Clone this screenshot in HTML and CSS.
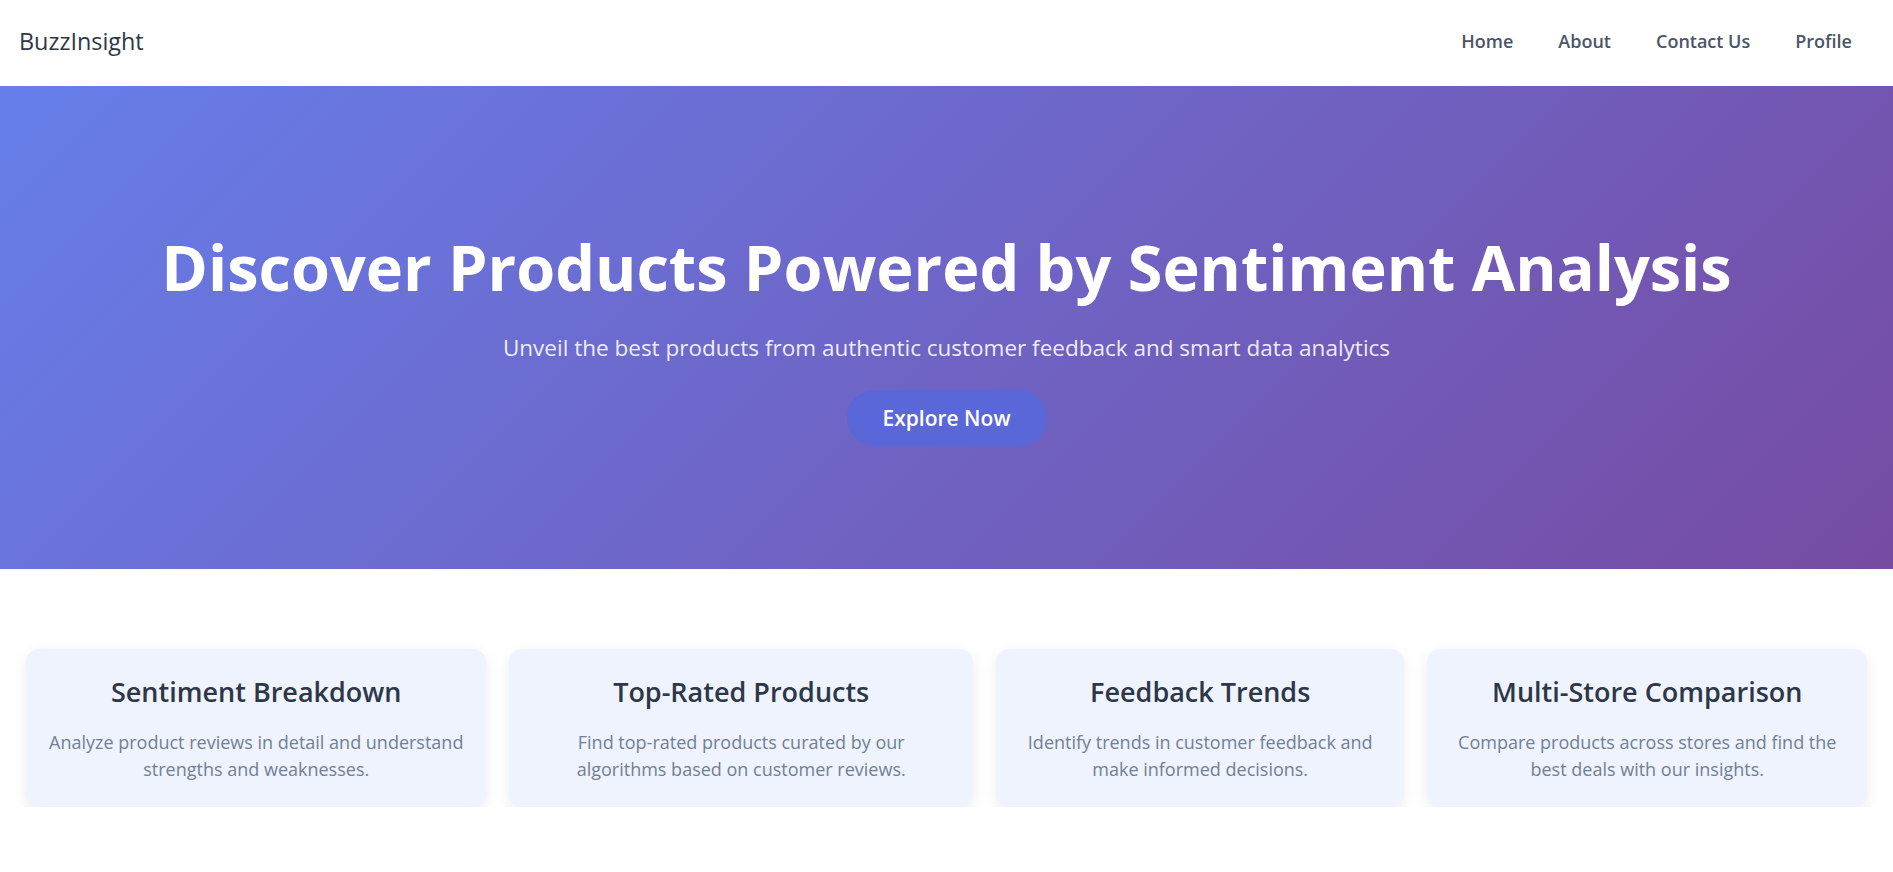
FILE: index.html
```html
<!DOCTYPE html>
<html lang="en">
<head>
<meta charset="utf-8">
<title>BuzzInsight</title>
<link rel="stylesheet" href="styles.css">
</head>
<body>
<header class="site-header">
  <div class="logo">BuzzInsight</div>
  <nav class="nav">
    <a href="#">Home</a>
    <a href="#">About</a>
    <a href="#">Contact Us</a>
    <a href="#">Profile</a>
  </nav>
</header>
<section class="hero">
  <h1 class="hero-title">Discover Products Powered by Sentiment Analysis</h1>
  <p class="hero-sub">Unveil the best products from authentic customer feedback and smart data analytics</p>
  <a class="hero-btn" href="#">Explore Now</a>
</section>
<section class="features">
  <div class="card">
    <h3>Sentiment Breakdown</h3>
    <p>Analyze product reviews in detail and understand strengths and weaknesses.</p>
  </div>
  <div class="card">
    <h3>Top-Rated Products</h3>
    <p>Find top-rated products curated by our algorithms based on customer reviews.</p>
  </div>
  <div class="card">
    <h3>Feedback Trends</h3>
    <p>Identify trends in customer feedback and make informed decisions.</p>
  </div>
  <div class="card">
    <h3>Multi-Store Comparison</h3>
    <p>Compare products across stores and find the best deals with our insights.</p>
  </div>
</section>
</body>
</html>
```
FILE: styles.css
```css
* { box-sizing: border-box; }
body {
  margin: 0;
  font-family: "Open Sans", "Noto Sans", sans-serif;
  background: #ffffff;
  color: #2d3748;
}
.site-header {
  height: 86px;
  display: flex;
  align-items: center;
  justify-content: space-between;
  padding: 0 41px 4px 19px;
  background: #fff;
}
.logo {
  font-size: 23.4px;
  font-weight: 500;
  color: #2d3748;
}
.nav {
  display: flex;
  gap: 45px;
}
.nav a {
  font-size: 18px;
  font-weight: 600;
  color: #4a5568;
  text-decoration: none;
}
.hero {
  height: 483px;
  background: linear-gradient(135deg, #667eea 0%, #764ba2 100%);
  display: flex;
  flex-direction: column;
  align-items: center;
  padding-top: 143px;
  color: #fff;
  text-align: center;
}
.hero-title {
  margin: 0;
  font-size: 63px;
  line-height: 1.2;
  font-weight: 700;
}
.hero-sub {
  margin: 26px 0 25px;
  font-size: 22.5px;
  line-height: 1.55;
  color: rgba(255, 255, 255, 0.9);
}
.hero-btn {
  display: inline-flex;
  align-items: center;
  justify-content: center;
  width: 200px;
  height: 56px;
  border-radius: 28px;
  background: #5a67d8;
  color: #fff;
  font-size: 21px;
  font-weight: 600;
  text-decoration: none;
}
.features {
  display: grid;
  grid-template-columns: 461fr 464fr 409fr 440fr;
  align-items: start;
  gap: 23px;
  padding: 80px 26px 0;
}
.card {
  background: #eef3fd;
  border-radius: 13px;
  padding: 25px 22.5px 24px;
  text-align: center;
  box-shadow: 0 4px 14px rgba(0, 0, 0, 0.08);
}
.card h3 {
  margin: 0 0 18px;
  font-size: 27px;
  font-weight: 600;
  line-height: 1.362;
  color: #2d3748;
}
.card p {
  margin: 0;
  font-size: 18px;
  line-height: 27px;
  color: #718096;
}
```
